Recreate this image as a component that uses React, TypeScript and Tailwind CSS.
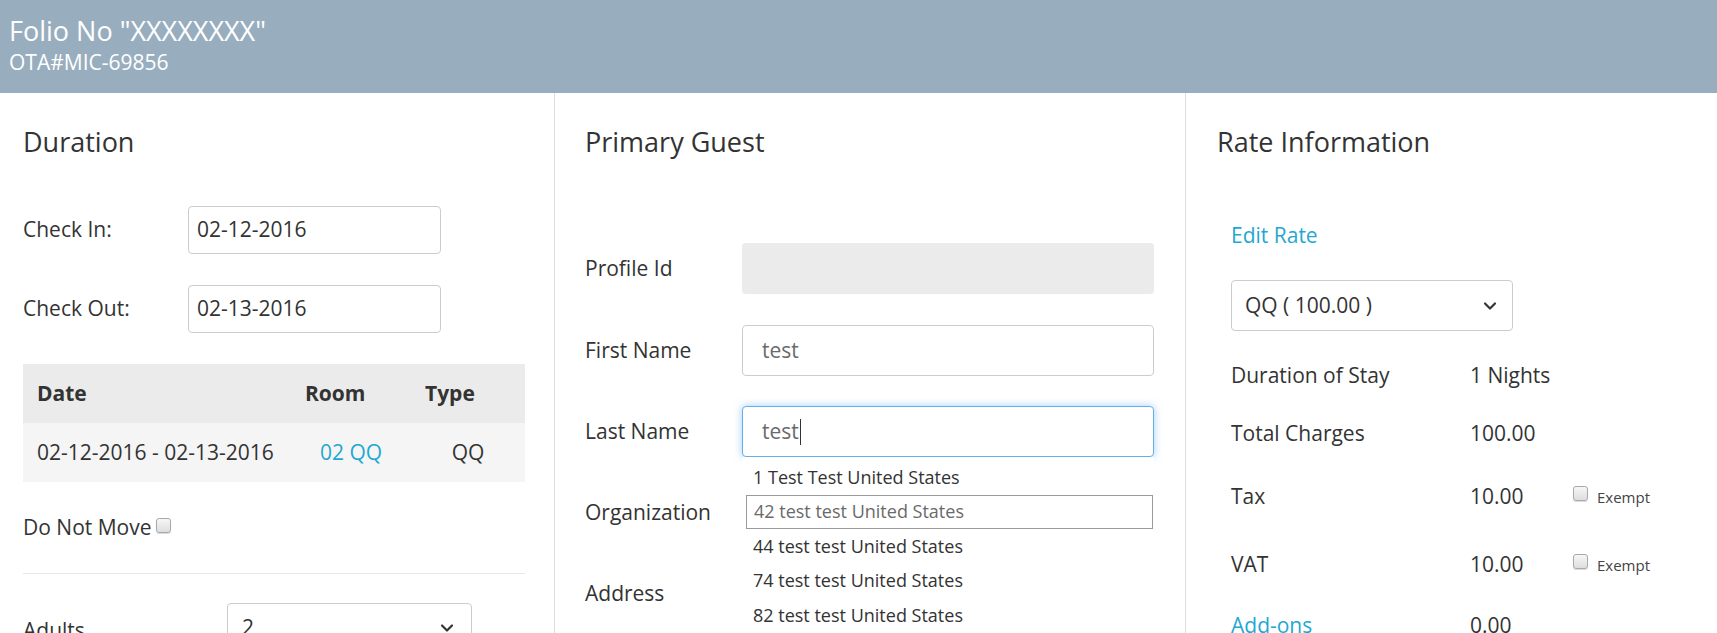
import React from "react";
import { ChevronDown } from "lucide-react";

const LINK = "text-[#1fa8d2]";

const Checkbox = () => (
  <span className="inline-block h-[15px] w-[15px] rounded-[3px] border border-[#a9a9a9] bg-gradient-to-b from-[#f6f6f6] to-[#dedede] shadow-[0_1px_1px_rgba(0,0,0,0.15)]" />
);

const TextInput = ({
  value,
  className = "",
}: {
  value?: string;
  className?: string;
}) => (
  <div
    className={`flex items-center rounded-[4px] border border-[#cccccc] bg-white px-[19px] text-[21px] text-[#6a6a6a] ${className}`}
  >
    {value}
  </div>
);

const FormRow = ({
  label,
  labelWidth,
  children,
  className = "",
}: {
  label: string;
  labelWidth: string;
  children: React.ReactNode;
  className?: string;
}) => (
  <div className={`flex items-center ${className}`}>
    <div className={`${labelWidth} shrink-0`}>{label}</div>
    {children}
  </div>
);

// --- Duration column ---
const DurationColumn = () => (
  <div className="w-[555px] shrink-0 border-r border-[#dddddd] pl-[23px] pr-[29px] pt-[31px]">
    <h2 className="text-[27px] leading-[36px]">Duration</h2>

    <FormRow label="Check In:" labelWidth="w-[165px]" className="mt-[46px] h-[48px]">
      <div className="flex h-[48px] w-[253px] items-center rounded-[4px] border border-[#cccccc] px-[8px]">
        02-12-2016
      </div>
    </FormRow>
    <FormRow label="Check Out:" labelWidth="w-[165px]" className="mt-[31px] h-[48px]">
      <div className="flex h-[48px] w-[253px] items-center rounded-[4px] border border-[#cccccc] px-[8px]">
        02-13-2016
      </div>
    </FormRow>

    <div className="mt-[31px]">
      <div className="flex h-[59px] items-center bg-[#ebebeb] font-bold">
        <div className="w-[268px] pl-[14px]">Date</div>
        <div className="w-[120px] pl-[14px]">Room</div>
        <div className="flex-1 pl-[14px]">Type</div>
      </div>
      <div className="flex h-[59px] items-center bg-[#f5f5f5]">
        <div className="w-[268px] pl-[14px]">02-12-2016 - 02-13-2016</div>
        <div className={`w-[120px] text-center ${LINK}`}>02 QQ</div>
        <div className="flex-1 text-center">QQ</div>
      </div>
    </div>

    <div className="mt-[28px] flex h-[36px] items-center gap-[4px]">
      <span>Do Not Move</span>
      <span className="-mt-[6px] flex">
        <Checkbox />
      </span>
    </div>

    <div className="mt-[27px] border-t border-[#e8e8e8]" />

    <FormRow label="Adults" labelWidth="w-[204px]" className="mt-[29px] h-[50px] items-start pt-[12px]">
      <div className="-mt-[12px] flex h-[50px] w-[245px] items-center justify-between rounded-[4px] border border-[#cccccc] px-[14px]">
        <span>2</span>
        <ChevronDown size={20} strokeWidth={2.6} className="text-[#333]" />
      </div>
    </FormRow>
  </div>
);

// --- Primary guest column ---
const suggestions = [
  "1 Test Test United States",
  "42 test test United States",
  "44 test test United States",
  "74 test test United States",
  "82 test test United States",
];

const GuestColumn = () => (
  <div className="w-[631px] shrink-0 border-r border-[#dddddd] pl-[30px] pr-[31px] pt-[31px]">
    <h2 className="text-[27px] leading-[36px]">Primary Guest</h2>

    <FormRow label="Profile Id" labelWidth="w-[157px]" className="mt-[83px]">
      <div className="h-[51px] flex-1 rounded-[4px] bg-[#ebebeb]" />
    </FormRow>
    <FormRow label="First Name" labelWidth="w-[157px]" className="mt-[31px]">
      <TextInput value="test" className="h-[51px] flex-1" />
    </FormRow>

    <div className="relative">
      <FormRow label="Last Name" labelWidth="w-[157px]" className="mt-[30px]">
        <div className="flex h-[51px] flex-1 items-center rounded-[4px] border border-[#66afe9] bg-white px-[19px] text-[#6a6a6a] shadow-[0_0_8px_rgba(102,175,233,0.6)]">
          test
          <span className="ml-[1px] inline-block h-[26px] w-[1px] bg-[#333]" />
        </div>
      </FormRow>
      <FormRow label="Organization" labelWidth="w-[157px]" className="mt-[30px]">
        <TextInput className="h-[51px] flex-1" />
      </FormRow>
      <FormRow label="Address" labelWidth="w-[157px]" className="mt-[30px]">
        <TextInput className="h-[51px] flex-1" />
      </FormRow>

      <ul className="absolute left-[157px] right-0 top-[51px] bg-white pl-[4px] pr-[1px] pt-[3px] text-[18px]">
        {suggestions.map((s, i) => (
          <li
            key={s}
            className={`flex h-[34.5px] items-center px-[7px] ${
              i === 1 ? "border border-[#9a9a9a] text-[#6a6a6a]" : "text-[#333]"
            }`}
          >
            {s}
          </li>
        ))}
        <li className="h-[40px]" />
      </ul>
    </div>
  </div>
);

// --- Rate column ---
const RateRow = ({
  label,
  value,
  h,
  link,
  exempt,
}: {
  label: string;
  value: string;
  h: string;
  link?: boolean;
  exempt?: boolean;
}) => (
  <div className={`flex ${h} items-center`}>
    <div className={`w-[239px] shrink-0 ${link ? LINK : ""}`}>{label}</div>
    <div className="w-[103px] shrink-0">{value}</div>
    {exempt && (
      <div className="flex items-center gap-[9px]">
        <span className="-mt-[8px] flex">
          <Checkbox />
        </span>
        <span className="text-[15px] text-[#444]">Exempt</span>
      </div>
    )}
  </div>
);

const RateColumn = () => (
  <div className="flex-1 pl-[31px] pt-[31px]">
    <h2 className="text-[27px] leading-[36px]">Rate Information</h2>
    <div className="pl-[14px]">
      <div className={`mt-[61px] leading-[28px] ${LINK}`}>Edit Rate</div>
      <div className="mt-[31px] flex h-[51px] w-[282px] items-center justify-between rounded-[4px] border border-[#cccccc] pl-[13px] pr-[12px]">
        <span>QQ ( 100.00 )</span>
        <ChevronDown size={20} strokeWidth={2.6} className="text-[#333]" />
      </div>
      <div className="mt-[16px]">
        <RateRow label="Duration of Stay" value="1 Nights" h="h-[58px]" />
        <RateRow label="Total Charges" value="100.00" h="h-[58px]" />
        <RateRow label="Tax" value="10.00" h="h-[68px]" exempt />
        <RateRow label="VAT" value="10.00" h="h-[68px]" exempt />
        <RateRow label="Add-ons" value="0.00" h="h-[54px]" link />
      </div>
    </div>
  </div>
);

export default function App() {
  return (
    <div className="h-[633px] w-full overflow-hidden bg-white font-['Open_Sans',sans-serif] text-[21px] text-[#333]">
      <header className="h-[93px] bg-[#98aebf] px-[9px] pt-[14px] text-white">
        <div className="text-[27px] leading-[34px]">Folio No "XXXXXXXX"</div>
        <div className="text-[21px] leading-[28px]">OTA#MIC-69856</div>
      </header>
      <div className="flex">
        <DurationColumn />
        <GuestColumn />
        <RateColumn />
      </div>
    </div>
  );
}
